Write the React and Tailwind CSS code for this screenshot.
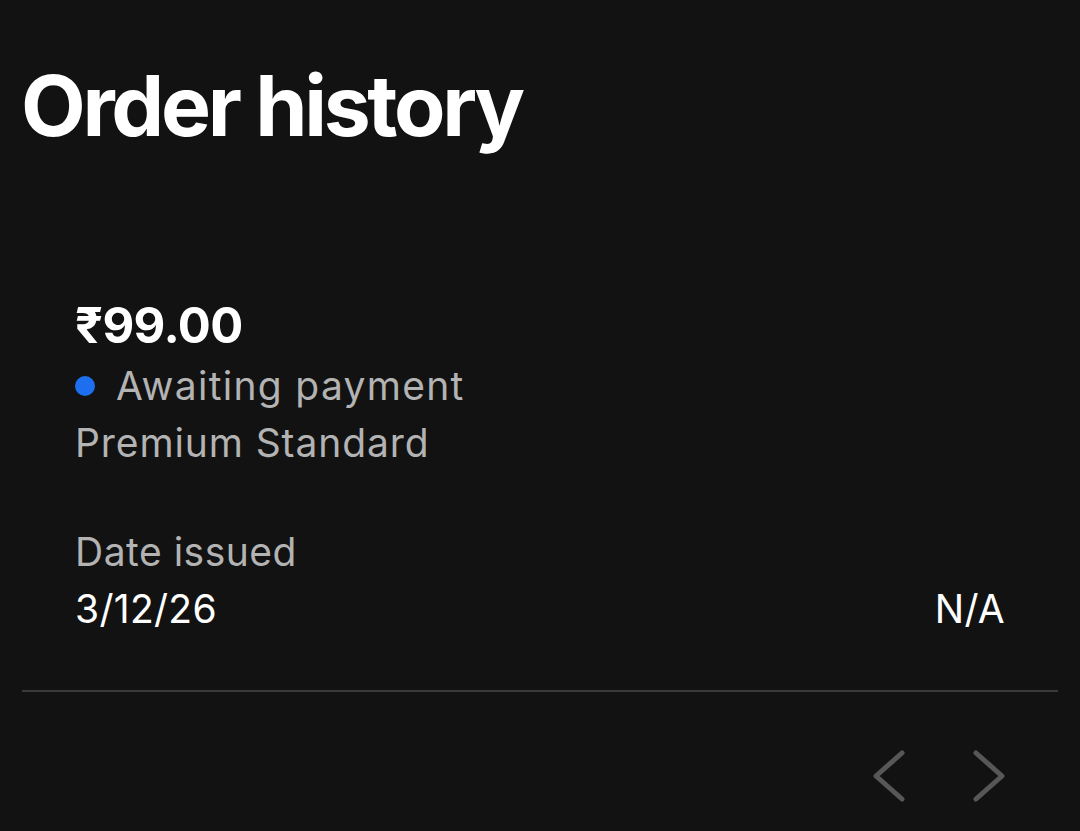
export default function App() {
  return (
    <div className="min-h-[831px] w-[1080px] bg-[#121212] text-white" style={{ fontFamily: 'Inter, "Noto Sans", sans-serif' }}>
      <div className="pl-[21px] pr-[22px] pt-[56px]">
        <h1 className="text-[84px] font-bold leading-[100px] tracking-[-3.3px]">Order history</h1>
      </div>
      <div className="mt-[140px] px-[75px]">
        <div className="text-[49px] font-bold leading-[60px] tracking-[-0.6px]">₹99.00</div>
        <div className="mt-[2px] flex items-center gap-[21px] text-[39px] leading-[56px] tracking-[1.3px] text-[#b3b3b3]">
          <span className="h-[20px] w-[20px] rounded-full bg-[#1e6ff0]"></span>
          <span>Awaiting payment</span>
        </div>
        <div className="text-[39px] leading-[58px] tracking-[0.9px] text-[#b3b3b3]">Premium Standard</div>
        <div className="mt-[52px] text-[39px] leading-[56px] tracking-[0.5px] text-[#b3b3b3]">Date issued</div>
        <div className="flex items-center justify-between text-[39px] leading-[58px] tracking-[0.3px] text-white">
          <span>3/12/26</span>
          <span>N/A</span>
        </div>
      </div>
      <div className="mx-[22px] mt-[52px] h-[2px] bg-[#3a3a3a]"></div>
      <div className="flex justify-end gap-[68px] pr-[75px] pt-[58px]">
        <svg width="32" height="52" viewBox="0 0 32 52" fill="none" stroke="#575757" strokeWidth="5" strokeLinecap="round" strokeLinejoin="round">
          <path d="M29 3 L3 26 L29 49" />
        </svg>
        <svg width="32" height="52" viewBox="0 0 32 52" fill="none" stroke="#575757" strokeWidth="5" strokeLinecap="round" strokeLinejoin="round">
          <path d="M3 3 L29 26 L3 49" />
        </svg>
      </div>
    </div>
  );
}
